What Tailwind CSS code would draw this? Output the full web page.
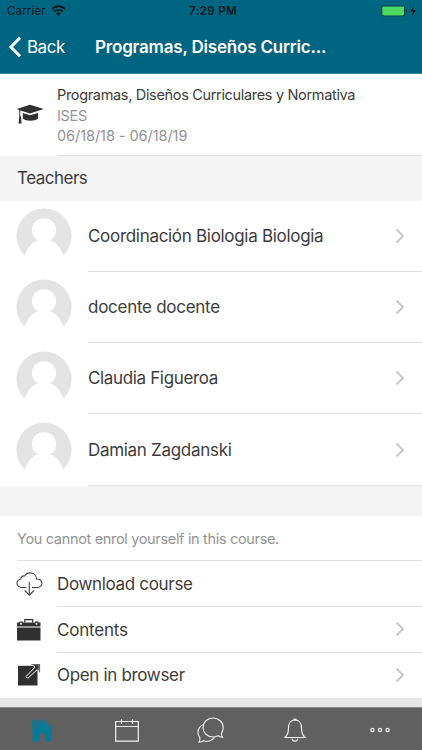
<!DOCTYPE html>
<html lang="en">
<head>
<meta charset="utf-8">
<title>Course</title>
<script src="https://cdn.jsdelivr.net/npm/@tailwindcss/browser@4"></script>
</head>
<body class="bg-white">
<svg class="hidden">
  <symbol id="avatar" viewBox="0 0 56 56"><circle cx="28" cy="28" r="27.5" fill="#e4e4e4"/><ellipse cx="28" cy="22" rx="12.200" ry="11.800" fill="#fff"/><path d="M21 32.500h14C40.500 34.500 44.500 40 47.500 47.800L50 56H6l2.500-8.200C11.500 40 15.500 34.500 21 32.500z" fill="#fff"/></symbol>
  <symbol id="chev" viewBox="0 0 10 16"><path d="M1.500 1.500 8 8l-6.500 6.500" fill="none" stroke="#c7c7cb" stroke-width="1.900"/></symbol>
</svg>
<div class="flex h-[750px] w-[422px] flex-col overflow-hidden bg-white font-['Inter',sans-serif] text-[#3c3c3c]">
  <header class="h-[74px] shrink-0 border-b border-[#3c88a0] bg-[#006581]">
    <div class="grid h-[22px] grid-cols-3 items-center pl-[7px] pr-[5px] text-[11.500px] leading-none text-[#08191f]">
      <div class="flex items-center gap-[5px] pt-px"><span class="tracking-[0.150px]">Carrier</span>
        <svg class="mt-[-2px] h-[11px] w-[15px]" viewBox="0 0 15 11"><g fill="none" stroke="#08191f" stroke-width="2"><path d="M1 4c3.800-3.600 9.200-3.600 13 0M3.300 6.600c2.500-2.300 5.900-2.300 8.400 0"/></g><path d="M5 8.300c1.500-1.300 3.500-1.300 5 0L7.500 10.800z" fill="#08191f"/></svg>
      </div>
      <div class="pl-[2px] pt-px text-center font-semibold tracking-[0.350px]">7:29 PM</div>
      <div class="flex items-center justify-end">
        <svg class="h-[12px] w-[36px]" viewBox="0 0 36 12"><rect x=".7" y="1" width="23" height="10" rx="2" fill="#4cd964" stroke="#06404d" stroke-width="1.200"/><path d="M25 4v4c1.300-.4 1.300-3.600 0-4z" fill="#06404d"/><path d="M33 .8 29.200 6.500H32L31 11.200l4-6.100h-2.900z" fill="#08191f"/></svg>
      </div>
    </div>
    <div class="flex h-[51px] items-center pl-[8px] text-white">
      <svg class="mt-[-2px] h-[22px] w-[15px]" viewBox="0 0 15 22"><path d="M12 1.800 3 11l9 9.200" fill="none" stroke="#fff" stroke-width="3"/></svg>
      <span class="ml-[4px] w-[68px] text-[17px] tracking-[-0.500px]">Back</span>
      <span class="text-[17px] font-semibold tracking-[-0.180px]">Programas, Diseños Curric...</span>
    </div>
  </header>

  <section class="flex h-[82px] shrink-0">
    <div class="flex w-[57px] items-center pl-[16px] pb-[2px]">
      <svg class="h-[20px] w-[28px]" viewBox="0 0 28 20"><path d="M14 .8 27.800 5 14 9.400 4.300 6.400v5l.7 1.600.6 6.400H2.500l.8-6.600V5.900L.8 5z" fill="#303030"/><path d="M6.800 9 14 11.300 22 8.900v5.700c-3.500 2.900-11.700 2.900-15.200 0z" fill="#303030"/></svg>
    </div>
    <div class="flex-1 border-b border-[#e1e1e3] pt-[11px] text-[14.500px] leading-[20.500px]">
      <div class="tracking-[-0.330px]">Programas, Diseños Curriculares y Normativa</div>
      <div class="text-[#939396] tracking-[-0.300px]">ISES</div>
      <div class="text-[#939396] tracking-[-0.060px]">06/18/18 - 06/18/19</div>
    </div>
  </section>

  <h2 class="flex h-[44.500px] shrink-0 items-center bg-[#f4f4f4] pl-[17px] pt-px text-[17px] tracking-[-0.500px]">Teachers</h2>

  <ul class="shrink-0">
    <li class="flex h-[71.300px] pl-[16px]"><svg class="mt-[7.500px] h-[56px] w-[56px]"><use href="#avatar"/></svg><div class="ml-[16px] flex flex-1 items-center justify-between border-b border-[#e1e1e3] pr-[17px] text-[17px] tracking-[-0.300px]"><span class="pt-[2px]">Coordinación Biologia Biologia</span><svg class="h-[16px] w-[10px]"><use href="#chev"/></svg></div></li>
    <li class="flex h-[71.300px] pl-[16px]"><svg class="mt-[7.500px] h-[56px] w-[56px]"><use href="#avatar"/></svg><div class="ml-[16px] flex flex-1 items-center justify-between border-b border-[#e1e1e3] pr-[17px] text-[17px] tracking-[-0.270px]"><span class="pt-[2px]">docente docente</span><svg class="h-[16px] w-[10px]"><use href="#chev"/></svg></div></li>
    <li class="flex h-[71.300px] pl-[16px]"><svg class="mt-[7.500px] h-[56px] w-[56px]"><use href="#avatar"/></svg><div class="ml-[16px] flex flex-1 items-center justify-between border-b border-[#e1e1e3] pr-[17px] text-[17px] tracking-[-0.350px]"><span class="pt-[2px]">Claudia Figueroa</span><svg class="h-[16px] w-[10px]"><use href="#chev"/></svg></div></li>
    <li class="flex h-[71.300px] pl-[16px]"><svg class="mt-[7.500px] h-[56px] w-[56px]"><use href="#avatar"/></svg><div class="ml-[16px] flex flex-1 items-center justify-between border-b border-[#e1e1e3] pr-[17px] text-[17px] tracking-[-0.300px]"><span class="pt-[2px]">Damian Zagdanski</span><svg class="h-[16px] w-[10px]"><use href="#chev"/></svg></div></li>
  </ul>

  <div class="h-[30.300px] shrink-0 bg-[#f4f4f4]"></div>

  <div class="ml-[17px] flex h-[45px] shrink-0 items-center border-b border-[#e1e1e3] pt-px text-[14.500px] tracking-[-0.330px] text-[#939396]">You cannot enrol yourself in this course.</div>
  <div class="flex h-[46px] shrink-0">
    <div class="flex w-[57px] items-center pl-[16px]"><svg class="h-[24px] w-[27px]" viewBox="0 0 27 24" fill="none" stroke="#444" stroke-width="1.100"><path d="M10.500 15.500H6C3.200 15.500 1 13.800 1 11.300c0-2.300 1.500-3.800 3.700-4.300C4.800 4.800 6.700 3.500 8.700 4 9.700 2 11.500.9 14 .9c3.800 0 6.500 2.500 6.500 6.100 3.200.1 5.500 1.800 5.500 4.300 0 2.500-2.200 4.200-5 4.200H16M13.300 10v13M8.700 18.500l4.600 4.600 4.600-4.600"/></svg></div>
    <div class="flex flex-1 items-center border-b border-[#e1e1e3] pt-[2px] text-[17px] tracking-[-0.330px]">Download course</div>
  </div>
  <div class="flex h-[46px] shrink-0">
    <div class="flex w-[57px] items-center pl-[17px]"><svg class="h-[22px] w-[24px]" viewBox="0 0 24 22"><path d="M0 3.500h2.500V2.500h3.300v1H18v-1h3.500v1H23.500V7.500H0zM0 8.500h23.500V21.500H0z" fill="#303030"/><path d="M7.800 3.500V.7h7.900v2.800" fill="none" stroke="#303030" stroke-width="1.200"/><circle cx="4" cy="4.700" r="1" fill="#fff"/><circle cx="19.500" cy="4.700" r="1" fill="#fff"/></svg></div>
    <div class="flex flex-1 items-center justify-between border-b border-[#e1e1e3] pr-[17px] text-[17px] tracking-[-0.200px]"><span class="pt-[2px]">Contents</span><svg class="h-[16px] w-[10px]"><use href="#chev"/></svg></div>
  </div>
  <div class="flex h-[45.500px] shrink-0">
    <div class="flex w-[57px] items-center pl-[18px]"><svg class="mt-[-1px] h-[22px] w-[23px]" viewBox="0 0 23 22"><path d="M0 1.800h19.500V21.500H0z" fill="#303030"/><path d="m8 12.600 1.700 1.800L19.200 5.700l2 2V.6h-7.100l2.900 2.600z" fill="#303030" stroke="#fff" stroke-width="1"/><path d="M13.700.4h7.900v7.900" fill="none" stroke="#303030" stroke-width=".8"/></svg></div>
    <div class="flex flex-1 items-center justify-between pr-[17px] text-[17px] tracking-[-0.330px]"><span class="pt-px">Open in browser</span><svg class="mt-[-1px] h-[16px] w-[10px]"><use href="#chev"/></svg></div>
  </div>
  <div class="flex-1 bg-[#e7e7e7]"></div>
  <nav class="grid h-[43px] shrink-0 grid-cols-5 items-center justify-items-center border-t border-[#8a8a8a] bg-[#606060] pt-[2px]">
    <svg class="h-[24px] w-[24px]" viewBox="0 0 24 24"><path d="M2.300 2h3.500v3.300L12 .8l11 8.300-.7 1L12 2.500 1.700 10.100l-.7-1 1.300-1z" fill="#087a99"/><path d="M12 3.300 21.500 10.400V23.500H15v-7.700H9.300v7.700H2.500V10.400z" fill="#087a99"/></svg>
    <svg class="h-[24px] w-[24px]" viewBox="0 0 24 24" fill="none" stroke="#f0f0f0" stroke-width="1.200"><path d="M.7 3.500h22.600v19.700H.7zM.7 8.500h22.600M6.500 1v5M17.500 1v5"/></svg>
    <svg class="h-[26px] w-[27px]" viewBox="0 0 27 26" fill="none" stroke="#f0f0f0" stroke-width="1.100"><path d="M16 1C10.300 1 6 5.200 6 10.500S10.300 20 16 20c2 0 3.500-.5 5-1.300 1.200 1 2.700 1.400 4.500 1.400-.9-1.200-1.300-2.600-.9-4C25.700 14.500 26.200 12.600 26.200 10.500 26.200 5.200 21.700 1 16 1z"/><path d="M6.500 7.500C3 9 1 12 1 15.500c0 2 .7 3.800 1.900 5.300.3 1.700-.1 3.200-.9 4.400 2 0 3.400-.5 4.600-1.500 3.400 1.500 8.400.5 10.800-3.300"/></svg>
    <svg class="h-[24px] w-[22px]" viewBox="0 0 22 24" fill="none" stroke="#f0f0f0" stroke-width="1.200"><path d="M11 2c-4.500 0-6.500 3.300-6.500 8 0 4.500-.5 6.800-3.500 9.500h20c-3-2.700-3.500-5-3.500-9.500 0-4.700-2-8-6.500-8zM8.200 20.500c0 3.500 5.600 3.500 5.600 0"/><path d="M9.500 1.500h3" stroke-width="1.800"/></svg>
    <svg class="h-[6px] w-[20px]" viewBox="0 0 20 6" fill="none" stroke="#f0f0f0" stroke-width="1.200"><circle cx="2.400" cy="3" r="1.600"/><circle cx="10" cy="3" r="1.600"/><circle cx="17.600" cy="3" r="1.600"/></svg>
  </nav>
</div>
</body>
</html>
